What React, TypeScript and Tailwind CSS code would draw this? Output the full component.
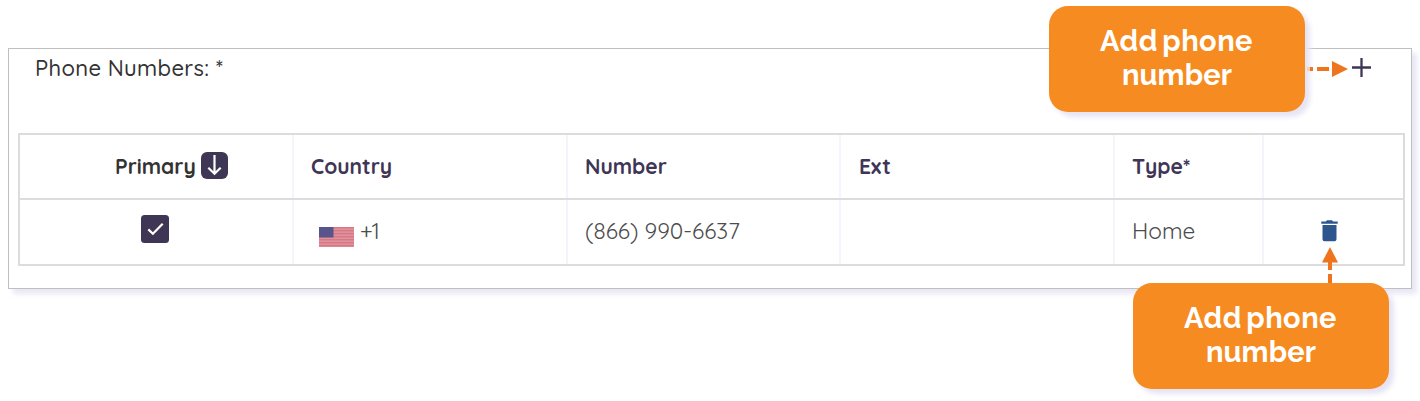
import { ReactNode } from "react";

interface CellProps {
  children?: ReactNode;
  className?: string;
}

const columns = "grid grid-cols-[274px_274px_273px_274px_149px_139px]";

const HeadCell = ({ children, className = "" }: CellProps) => (
  <div
    className={`flex items-center border-r-2 border-[#f5f4fb] pl-[17px] text-[21px] font-bold text-[#3f3656] last:border-r-0 ${className}`}
  >
    {children}
  </div>
);

const Cell = ({ children, className = "" }: CellProps) => (
  <div
    className={`flex items-center border-r-2 border-[#f5f4fb] pl-[17px] text-[22.6px] text-[#4c4c4c] last:border-r-0 ${className}`}
  >
    {children}
  </div>
);

const SortIcon = () => (
  <svg width="27" height="27" viewBox="0 0 27 27">
    <rect width="27" height="27" rx="6" fill="#3f3656" />
    <path d="M13.5 3V21.8M7.3 15.8l6.2 6 6.2-6" fill="none" stroke="#fff" strokeWidth="2.2" />
  </svg>
);

const CheckBox = () => (
  <svg width="28" height="28" viewBox="0 0 28 28">
    <rect width="28" height="28" rx="3.5" fill="#3f3656" />
    <path d="M7.3 14.4l4.6 4.4 9.8-10" fill="none" stroke="#fff" strokeWidth="2.2" />
  </svg>
);

const stripes = [0, 3, 6, 9, 12, 15, 18];

const UsFlag = () => (
  <svg width="35" height="20" viewBox="0 0 35 20">
    <rect width="35" height="20" fill="#df929b" />
    {stripes.map((y) => (
      <rect key={y} y={y} width="35" height="1.4" fill="#d67986" />
    ))}
    <rect width="14.5" height="10.5" fill="#57558a" />
  </svg>
);

const TrashIcon = () => (
  <svg width="17" height="22" viewBox="0 0 17 22">
    <path
      d="M.3 1.5h4.6L6 .3h5l1.1 1.2h4.6v2.2H.3zM1.5 5h14v14.3a2 2 0 0 1-2 2h-10a2 2 0 0 1-2-2z"
      fill="#2d568f"
    />
  </svg>
);

const Callout = ({ className = "" }: CellProps) => (
  <div
    className={`absolute flex h-[106px] w-[256px] flex-col items-center rounded-[19px] bg-[#f68b21] pt-[18px] font-['Raleway','Lato',sans-serif] text-[29px] leading-[34px] font-bold text-white shadow-[5px_5px_5px_#e7e4f4] ${className}`}
  >
    <span className="pr-[1px] tracking-[0.45px] [word-spacing:-3px]">Add phone</span>
    <span className="tracking-[0.1px]">number</span>
  </div>
);

export default function App() {
  return (
    <div className="relative h-[401px] w-[1420px] overflow-hidden bg-white pt-12 pl-2 font-['Quicksand','Lato',sans-serif]">
      <div className="h-[241px] w-[1404px] border border-[#bfbfbf] bg-white px-[9px] shadow-[5px_5px_5px_#e9e7f5]">
        <div className="flex h-[84px] items-start justify-between pt-[4px] pr-[31px] pl-[17px]">
          <span className="-mt-px text-[22px] leading-8 font-medium tracking-[0.33px] text-[#333333]">
            Phone Numbers: *
          </span>
          <svg width="19" height="19" viewBox="0 0 19 19" className="mt-[5px]">
            <path d="M9.5 0v19M0 9.5h19" stroke="#3f3656" strokeWidth="2.3" />
          </svg>
        </div>

        <div className="w-[1387px] border-2 border-[#dcdcdc]">
          <div className={`${columns} h-[65px] border-b-2 border-[#dcdcdc]`}>
            <HeadCell className="gap-[5px] pl-[95px] text-[#333333]">
              <span>Primary</span>
              <span className="-mt-[2px]">
                <SortIcon />
              </span>
            </HeadCell>
            <HeadCell>Country</HeadCell>
            <HeadCell>Number</HeadCell>
            <HeadCell className="pl-[18px]">Ext</HeadCell>
            <HeadCell>Type*</HeadCell>
            <HeadCell />
          </div>

          <div className={`${columns} h-16`}>
            <Cell className="pb-[6px] pl-[121px]">
              <CheckBox />
            </Cell>
            <Cell className="gap-[6px] pb-[3px] pl-[25px]">
              <span className="pt-[12px]">
                <UsFlag />
              </span>
              <span>+1</span>
            </Cell>
            <Cell className="pb-[3px]">(866) 990-6637</Cell>
            <Cell />
            <Cell className="pb-[3px]">Home</Cell>
            <Cell className="pb-[2px] pl-[57px]">
              <TrashIcon />
            </Cell>
          </div>
        </div>
      </div>

      <Callout className="top-[6px] left-[1049px]" />
      <Callout className="top-[283px] left-[1133px]" />

      <svg width="44" height="18" viewBox="0 0 44 18" className="absolute top-[60px] left-[1305px]">
        <path d="M2 9h3" stroke="#f8cfae" strokeWidth="4" />
        <path d="M5 9h3M12 9h12" stroke="#ee741d" strokeWidth="4" />
        <path d="M27 1l16 8-16 8z" fill="#ee741d" />
      </svg>
      <svg width="16" height="36" viewBox="0 0 16 36" className="absolute top-[247px] left-[1322px]">
        <path d="M8 15v8M8 27v9" stroke="#ee741d" strokeWidth="4" />
        <path d="M0 15.5L8 0l8 15.5z" fill="#ee741d" />
      </svg>
    </div>
  );
}
